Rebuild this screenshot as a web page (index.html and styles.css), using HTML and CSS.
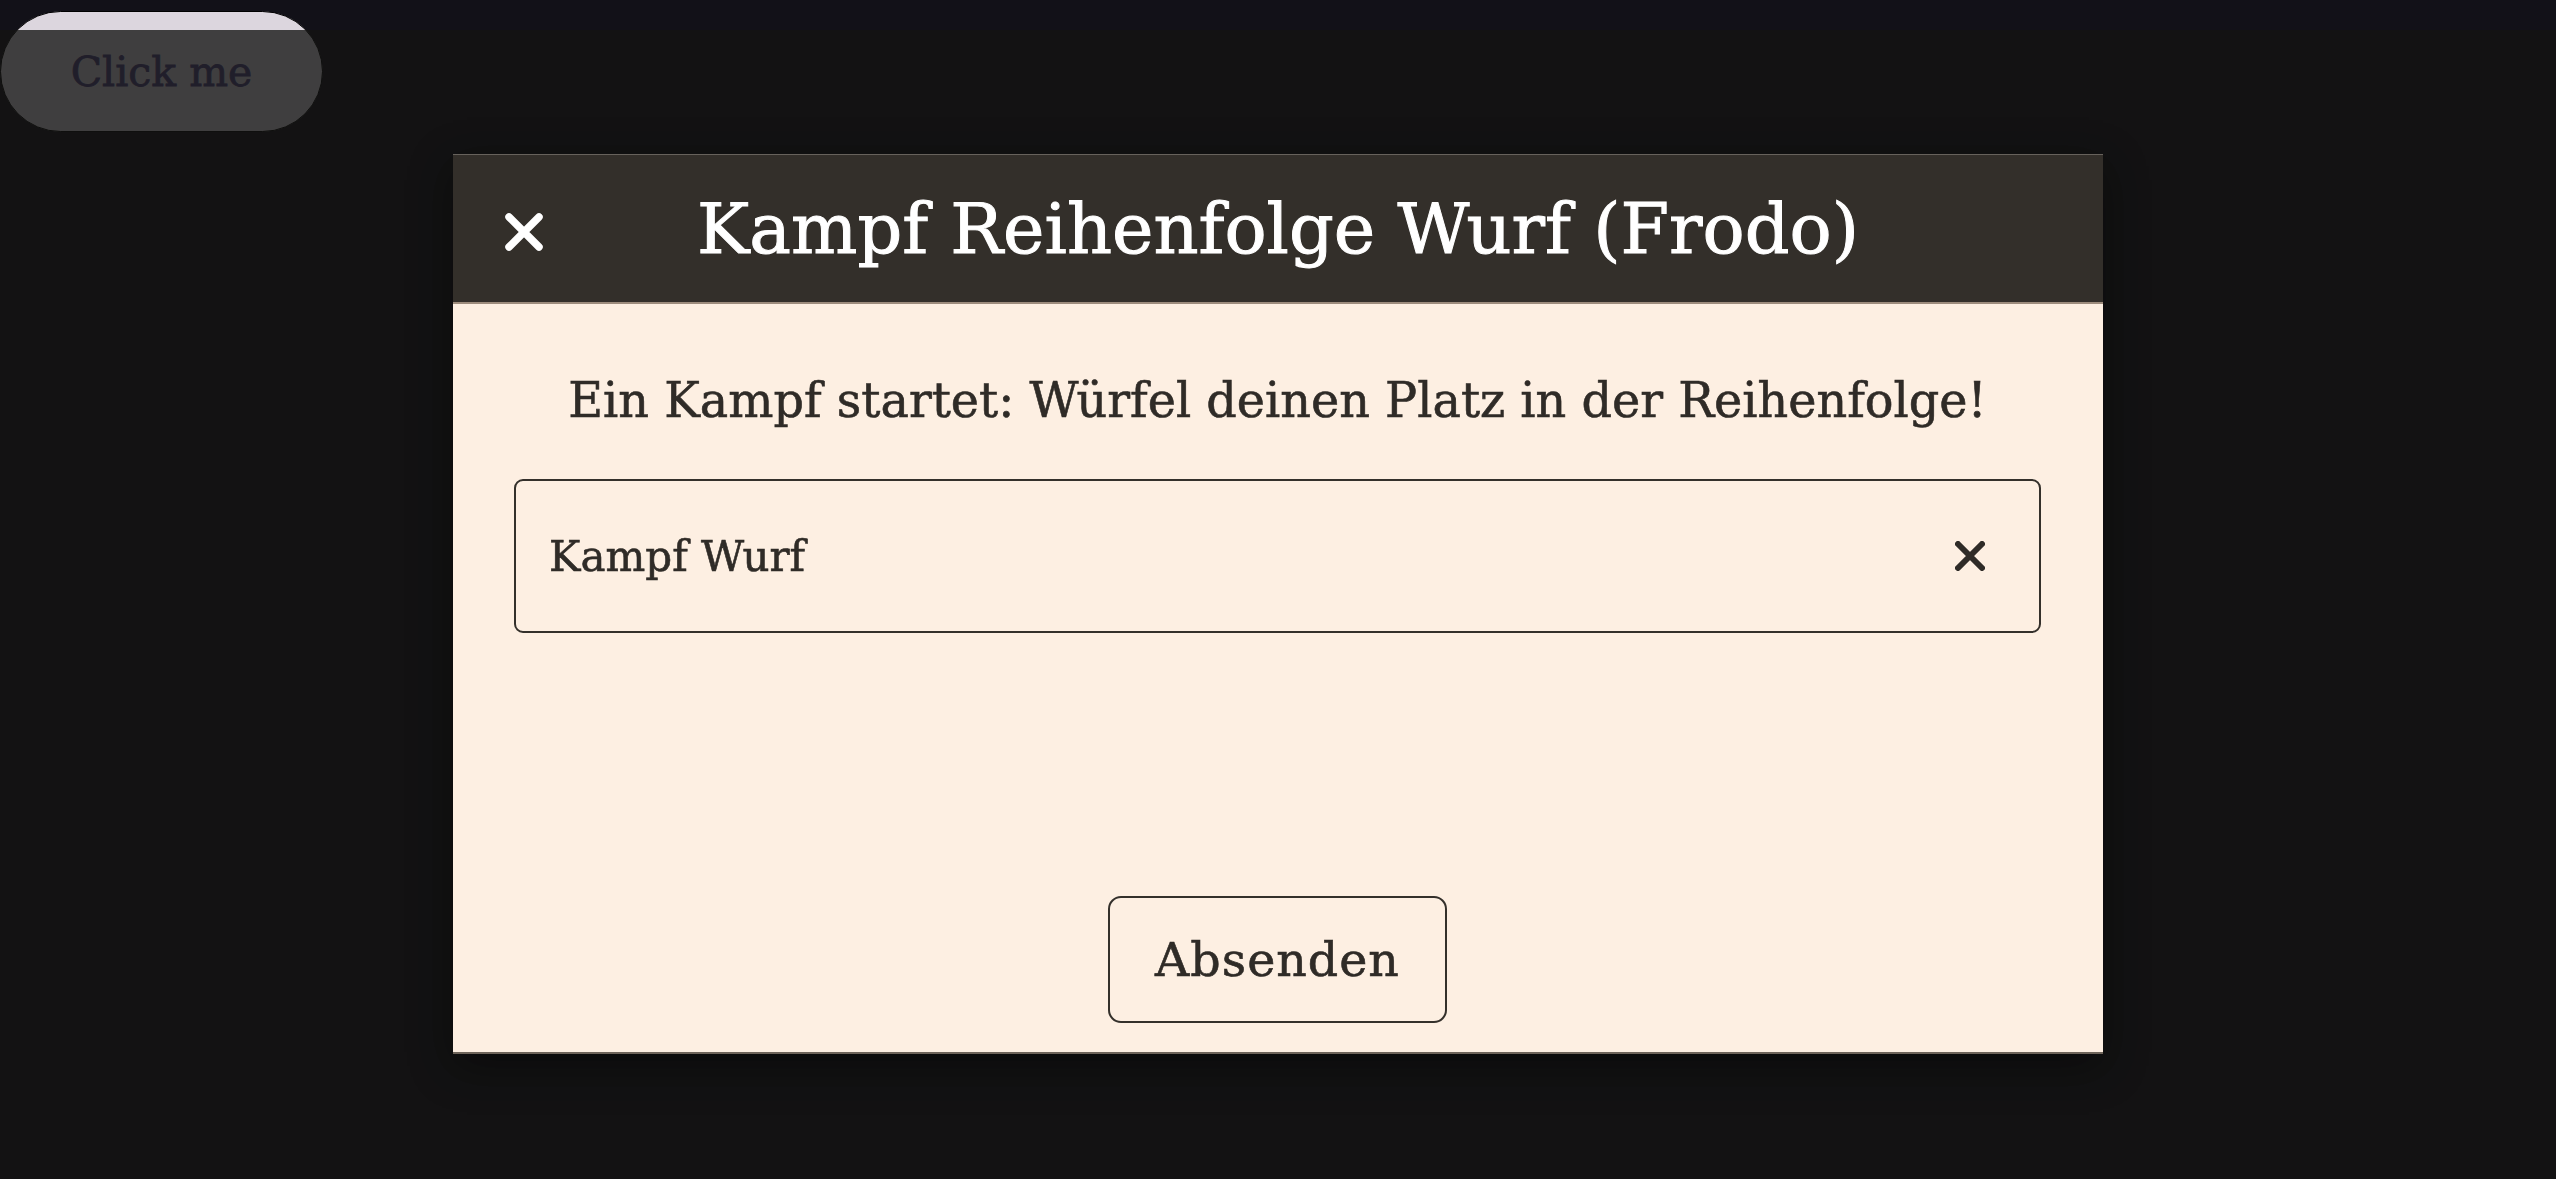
FILE: index.html
```html
<!DOCTYPE html>
<html lang="de">
<head>
<meta charset="utf-8">
<title>Kampf Reihenfolge Wurf</title>
<link rel="stylesheet" href="styles.css">
</head>
<body>
  <div class="app">
    <button class="click-btn">Click me</button>
  </div>
  <div class="backdrop">
    <div class="modal">
      <div class="modal-header">
        <button class="close-btn" aria-label="Schließen">
          <svg viewBox="0 0 38 38" width="38" height="38"><path d="M4 4 L34 34 M34 4 L4 34" stroke="#ffffff" stroke-width="7.5" stroke-linecap="round" fill="none"/></svg>
        </button>
        <h1 class="modal-title">Kampf Reihenfolge Wurf (Frodo)</h1>
        <span class="spacer"></span>
      </div>
      <div class="modal-body">
        <p class="prompt">Ein Kampf startet: Würfel deinen Platz in der Reihenfolge!</p>
        <div class="roll-field">
          <span class="roll-label">Kampf Wurf</span>
          <button class="clear-btn" aria-label="Entfernen">
            <svg viewBox="0 0 30 30" width="30" height="30"><path d="M3 3 L27 27 M27 3 L3 27" stroke="#2f2b27" stroke-width="6" stroke-linecap="round" fill="none"/></svg>
          </button>
        </div>
        <button class="submit-btn">Absenden</button>
      </div>
    </div>
  </div>
</body>
</html>
```
FILE: styles.css
```css
html, body {
  margin: 0;
  padding: 0;
  height: 100%;
}
body {
  background: #121118;
  font-family: "DejaVu Serif", "Liberation Serif", serif;
  overflow: hidden;
}
.app {
  padding-top: 11px;
}
.click-btn {
  display: block;
  width: 323px;
  height: 121px;
  border: 1px solid #000;
  border-radius: 61px;
  background: #dcd6de;
  color: #4f4580;
  font-family: "DejaVu Serif", serif;
  font-size: 41px;
  -webkit-text-stroke: 0.8px currentColor;
  padding: 0;
}
.backdrop {
  position: fixed;
  top: 30px;
  left: 0;
  right: 0;
  bottom: 0;
  background: rgba(19, 19, 18, 0.78);
  display: flex;
  justify-content: center;
  align-items: flex-start;
  padding-top: 124px;
}
.modal {
  width: 1650px;
  height: 900px;
  display: flex;
  flex-direction: column;
  background: #fdefe2;
  border-bottom: 2px solid #6e645a;
  box-sizing: border-box;
  box-shadow: 0 12px 40px rgba(0, 0, 0, 0.45);
}
.modal-header {
  height: 150px;
  box-sizing: border-box;
  background: #332f2a;
  border-top: 1px solid #67625c;
  border-bottom: 2px solid #9d8c7d;
  display: grid;
  grid-template-columns: 1fr auto 1fr;
  align-items: center;
}
.close-btn {
  justify-self: start;
  margin-left: 52px;
  margin-top: 6px;
  background: none;
  border: none;
  padding: 0;
  display: flex;
}
.modal-title {
  margin: 0;
  color: #ffffff;
  font-weight: normal;
  font-size: 70px;
  -webkit-text-stroke: 1px currentColor;
  white-space: nowrap;
}
.modal-body {
  flex: 1;
  display: flex;
  flex-direction: column;
  padding: 0 62px 29px 61px;
  color: #2f2b27;
}
.prompt {
  margin: 62px 0 0;
  text-align: center;
  font-size: 47.7px;
  line-height: 70px;
  -webkit-text-stroke: 0.6px currentColor;
}
.roll-field {
  margin-top: 43px;
  height: 154px;
  box-sizing: border-box;
  border: 2px solid #34302b;
  border-radius: 9px;
  display: flex;
  align-items: center;
  justify-content: space-between;
  padding: 0 54px 0 33px;
}
.roll-label {
  font-size: 42px;
  -webkit-text-stroke: 0.6px currentColor;
}
.clear-btn {
  background: none;
  border: none;
  padding: 0;
  display: flex;
}
.submit-btn {
  margin-top: auto;
  align-self: center;
  width: 339px;
  height: 127px;
  box-sizing: border-box;
  border: 2px solid #34302b;
  border-radius: 13px;
  background: transparent;
  color: #2f2b27;
  font-family: "DejaVu Serif", serif;
  font-size: 47.5px;
  letter-spacing: 1px;
  -webkit-text-stroke: 0.6px currentColor;
  padding: 0;
}
```
